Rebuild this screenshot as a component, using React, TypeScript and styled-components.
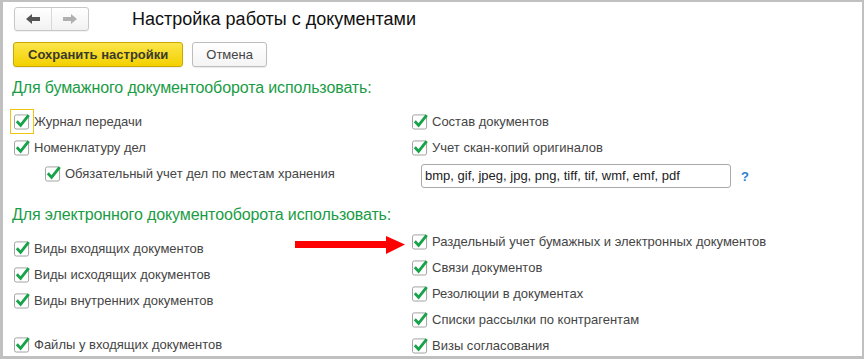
import React, { FC } from 'react';
import styled, { createGlobalStyle } from 'styled-components';

const GlobalStyle = createGlobalStyle`
  html, body {
    margin: 0;
    padding: 0;
    background: #ffffff;
  }
  body {
    font-family: 'Liberation Sans', Arial, sans-serif;
  }
`;

const Frame = styled.div`
  position: relative;
  box-sizing: border-box;
  width: 864px;
  height: 359px;
  overflow: hidden;
  background: #fff;
  border-style: solid;
  border-color: #c0c0c0;
  border-width: 2px 2px 3px 3px;
  padding: 5px 0 0 9px;
`;

const Header = styled.div`
  display: flex;
  align-items: center;
  height: 24px;
`;

const NavGroup = styled.div`
  display: flex;
  margin-left: 2px;
  height: 24px;
  box-sizing: border-box;
  border: 1px solid #c8c8c8;
  border-radius: 3px;
  background: linear-gradient(#ffffff, #f2f2f2);
  box-shadow: 0 1px 1px rgba(0, 0, 0, 0.06);
`;

const NavButton = styled.div<{ $divider?: boolean }>`
  width: 36px;
  display: flex;
  align-items: center;
  justify-content: center;
  border-left: ${(p) => (p.$divider ? '1px solid #d8d8d8' : 'none')};
`;

const Title = styled.div`
  margin-left: 43px;
  font-size: 18px;
  color: #111;
  line-height: 24px;
  padding-bottom: 1px;
`;

const ButtonBar = styled.div`
  display: flex;
  gap: 9px;
  margin-top: 11px;
  margin-left: 1px;
`;

const Button = styled.button<{ $primary?: boolean }>`
  height: 25px;
  box-sizing: border-box;
  padding: 0 ${(p) => (p.$primary ? '14px' : '13px')};
  font-family: 'Liberation Sans', Arial, sans-serif;
  font-size: 13px;
  font-weight: ${(p) => (p.$primary ? 700 : 400)};
  color: ${(p) => (p.$primary ? '#3a3a2a' : '#444')};
  border-radius: 3px;
  border: 1px solid ${(p) => (p.$primary ? '#c9a900' : '#bdbdbd')};
  background: ${(p) =>
    p.$primary
      ? 'linear-gradient(#fbe54a, #f3d100)'
      : 'linear-gradient(#ffffff, #f4f4f4)'};
  box-shadow: 0 1px 1px rgba(0, 0, 0, 0.08);
`;

const SectionTitle = styled.div<{ $top: number }>`
  margin-top: ${(p) => p.$top}px;
  font-size: 16px;
  line-height: 20px;
  letter-spacing: -0.12px;
  color: #1a9c45;
`;

const Columns = styled.div<{ $top: number }>`
  display: grid;
  grid-template-columns: 398px 1fr;
  margin-top: ${(p) => p.$top}px;
`;

const Column = styled.div<{ $offset?: number }>`
  display: flex;
  flex-direction: column;
  padding-top: ${(p) => p.$offset ?? 0}px;
`;

const Row = styled.div<{ $indent?: number; $gapBefore?: number }>`
  display: flex;
  align-items: center;
  height: 26px;
  padding-left: ${(p) => 2 + (p.$indent ?? 0)}px;
  margin-top: ${(p) => p.$gapBefore ?? 0}px;
  gap: 4px;
`;

const BoxWrap = styled.span<{ $focused?: boolean }>`
  display: inline-flex;
  width: 16px;
  height: 17px;
  outline: ${(p) => (p.$focused ? '1px solid #f1c40f' : 'none')};
  outline-offset: 3px;
`;

const Label = styled.span`
  font-size: 13px;
  color: #454545;
  white-space: nowrap;
`;

const InputRow = styled.div`
  display: flex;
  align-items: center;
  margin-top: 4px;
  padding-left: 11px;
  gap: 10px;
`;

const TextInput = styled.div`
  width: 310px;
  height: 24px;
  box-sizing: border-box;
  border: 1px solid #a9a9a9;
  border-radius: 3px;
  padding-left: 3px;
  font-size: 13px;
  line-height: 22px;
  color: #222;
`;

const Help = styled.span`
  font-size: 13px;
  font-weight: 700;
  color: #2a7ed2;
`;

const Arrow = styled.svg`
  position: absolute;
  left: 289px;
  top: 232px;
`;

const CheckIcon: FC = () => (
  <svg width="17" height="17" viewBox="0 0 17 17">
    <rect x="0.5" y="1.5" width="15" height="15" rx="2" fill="#fff" stroke="#9d9d9d" />
    <path d="M3 8.3 L7 12.6 L15.6 1.6" fill="none" stroke="#16a34a" strokeWidth="3" />
  </svg>
);

const Check: FC<{ label: string; indent?: number; focused?: boolean; gapBefore?: number }> = ({
  label,
  indent,
  focused,
  gapBefore,
}) => (
  <Row $indent={indent} $gapBefore={gapBefore}>
    <BoxWrap $focused={focused}>
      <CheckIcon />
    </BoxWrap>
    <Label>{label}</Label>
  </Row>
);

const NavArrow: FC<{ dir: 'left' | 'right'; color: string }> = ({ dir, color }) => (
  <svg width="14" height="10" viewBox="0 0 14 10" style={dir === 'right' ? { transform: 'scaleX(-1)' } : undefined}>
    <polygon points="0,5 6,0 6,10" fill={color} />
    <rect x="5" y="3" width="9" height="4" fill={color} />
  </svg>
);

export default function App() {
  return (
    <>
      <GlobalStyle />
      <Frame>
        <Header>
          <NavGroup>
            <NavButton>
              <NavArrow dir="left" color="#555" />
            </NavButton>
            <NavButton $divider>
              <NavArrow dir="right" color="#b0b0b0" />
            </NavButton>
          </NavGroup>
          <Title>Настройка работы с документами</Title>
        </Header>

        <ButtonBar>
          <Button $primary>Сохранить настройки</Button>
          <Button>Отмена</Button>
        </ButtonBar>

        <SectionTitle $top={11}>Для бумажного документооборота использовать:</SectionTitle>
        <Columns $top={10}>
          <Column>
            <Check label="Журнал передачи" focused />
            <Check label="Номенклатуру дел" />
            <Check label="Обязательный учет дел по местам хранения" indent={31} />
          </Column>
          <Column>
            <Check label="Состав документов" />
            <Check label="Учет скан-копий оригиналов" />
            <InputRow>
              <TextInput>bmp, gif, jpeg, jpg, png, tiff, tif, wmf, emf, pdf</TextInput>
              <Help>?</Help>
            </InputRow>
          </Column>
        </Columns>

        <SectionTitle $top={17}>Для электронного документооборота использовать:</SectionTitle>
        <Columns $top={3}>
          <Column $offset={7}>
            <Check label="Виды входящих документов" />
            <Check label="Виды исходящих документов" />
            <Check label="Виды внутренних документов" />
            <Check label="Файлы у входящих документов" gapBefore={18} />
          </Column>
          <Column>
            <Check label="Раздельный учет бумажных и электронных документов" />
            <Check label="Связи документов" />
            <Check label="Резолюции в документах" />
            <Check label="Списки рассылки по контрагентам" />
            <Check label="Визы согласования" />
          </Column>
        </Columns>

        <Arrow width="114" height="22" viewBox="0 0 114 22">
          <rect x="3" y="7" width="92" height="7" fill="#ff0000" />
          <polygon points="94,2 113,10.5 94,20" fill="#ff0000" />
        </Arrow>
      </Frame>
    </>
  );
}
